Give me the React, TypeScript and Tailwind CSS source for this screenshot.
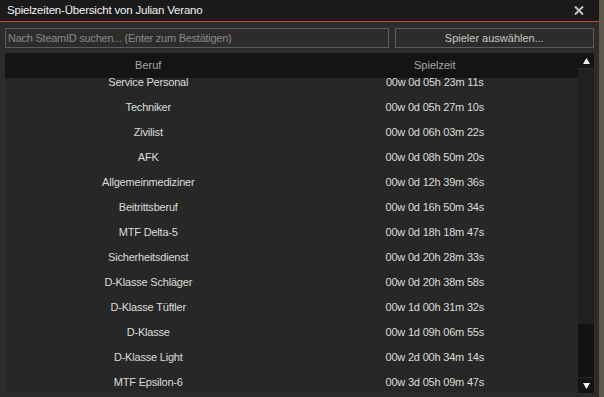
import React from 'react';

const rows: [string, string][] = [
  ['Service Personal', '00w 0d 05h 23m 11s'],
  ['Techniker', '00w 0d 05h 27m 10s'],
  ['Zivilist', '00w 0d 06h 03m 22s'],
  ['AFK', '00w 0d 08h 50m 20s'],
  ['Allgemeinmediziner', '00w 0d 12h 39m 36s'],
  ['Beitrittsberuf', '00w 0d 16h 50m 34s'],
  ['MTF Delta-5', '00w 0d 18h 18m 47s'],
  ['Sicherheitsdienst', '00w 0d 20h 28m 33s'],
  ['D-Klasse Schläger', '00w 0d 20h 38m 58s'],
  ['D-Klasse Tüftler', '00w 1d 00h 31m 32s'],
  ['D-Klasse', '00w 1d 09h 06m 55s'],
  ['D-Klasse Light', '00w 2d 00h 34m 14s'],
  ['MTF Epsilon-6', '00w 3d 05h 09m 47s'],
];

const Arrow = ({ down }: { down?: boolean }) => (
  <svg width="7" height="6" viewBox="0 0 7 6" className={down ? 'rotate-180' : ''}>
    <path d="M3.5 0 L7 6 L0 6 Z" fill="#f0f0f0" />
  </svg>
);

export default function App() {
  return (
    <div
      className="w-[604px] h-[397px] flex bg-[#5d5947] overflow-hidden"
      style={{ fontFamily: '"Liberation Sans", Arial, sans-serif' }}
    >
      <div className="w-[599px] h-full flex flex-col bg-[#2d2c2a]">
        {/* title bar */}
        <div className="h-[21px] flex items-center justify-between bg-[#1a1a1a] pl-[7px] pr-[15px]">
          <span className="text-[11.5px] tracking-[-0.2px] text-[#f2f2f2]">Spielzeiten-Übersicht von Julian Verano</span>
          <svg width="10" height="9" viewBox="0 0 10 9">
            <path d="M1 0.5 L9 8.5 M9 0.5 L1 8.5" stroke="#c4c4c4" strokeWidth="2" />
          </svg>
        </div>
        <div className="h-px bg-[#c8473c]" />

        {/* search row */}
        <div className="flex gap-[6px] px-[5px] mt-[6px] h-[20px]">
          <div className="w-[385px] border border-[#5c5c5c] flex items-center pl-[2px]">
            <span className="text-[11px] tracking-[-0.25px] text-[#8a8a8a]">Nach SteamID suchen... (Enter zum Bestätigen)</span>
          </div>
          <div className="w-[200px] border border-[#5c5c5c] flex items-center justify-center">
            <span className="text-[11px] text-[#c8c8c8]">Spieler auswählen...</span>
          </div>
        </div>

        {/* table */}
        <div className="flex mx-[5px] mt-[5px] h-[340px]">
          <div className="w-[574px] flex flex-col">
            <div className="h-[25px] shrink-0 flex items-center bg-[#141414] text-[11px] text-[#a8a8a8]">
              <div className="w-1/2 text-center">Beruf</div>
              <div className="w-1/2 text-center">Spielzeit</div>
            </div>
            <div className="flex-1 overflow-hidden bg-[#272727]">
              <div className="-mt-[8px]">
                {rows.map(([job, time]) => (
                  <div key={job} className="h-[25px] flex items-center text-[11px] tracking-[-0.2px] text-[#dcdcdc]">
                    <div className="w-1/2 text-center">{job}</div>
                    <div className="w-1/2 text-center">{time}</div>
                  </div>
                ))}
              </div>
            </div>
          </div>
          <div className="w-[16px] flex flex-col">
            <div className="h-[15px] bg-[#141414] flex items-center justify-center">
              <Arrow />
            </div>
            <div className="flex-1 flex flex-col bg-[#202020] border-t border-[#2a2a2a]">
              <div className="flex-1" />
              <div className="h-[53px] bg-[#121212]" />
            </div>
            <div className="h-[16px] bg-[#141414] border-t border-[#2a2a2a] flex items-center justify-center">
              <Arrow down />
            </div>
          </div>
        </div>
      </div>
    </div>
  );
}
